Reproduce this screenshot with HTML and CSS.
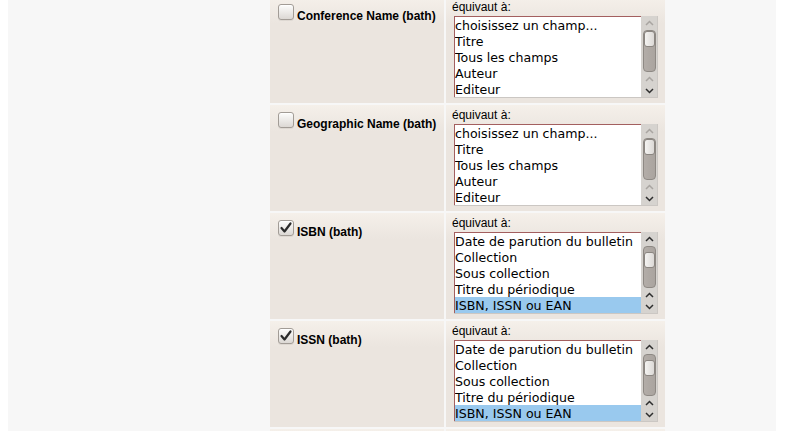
FILE: index.html
```html
<!DOCTYPE html>
<html lang="fr">
<head>
<meta charset="utf-8">
<title>Correspondance des champs</title>
<link rel="stylesheet" href="styles.css">
</head>
<body>
<div class="page">
  <div class="fields">

    <div class="row">
      <div class="cell name"><span class="cb"></span><span class="label">Conference Name (bath)</span></div>
      <div class="cell map">
        <div class="eq">équivaut à:</div>
        <div class="select">
          <ul class="list">
            <li>choisissez un champ...</li>
            <li>Titre</li>
            <li>Tous les champs</li>
            <li>Auteur</li>
            <li>Editeur</li>
          </ul>
          <div class="sb">
            <svg class="arr off" viewBox="0 0 9 6"><path d="M1 5 L4.5 1.5 L8 5"/></svg>
            <div class="track"><div class="thumb"></div></div>
            <svg class="arr off up2" viewBox="0 0 9 6"><path d="M1 5 L4.5 1.5 L8 5"/></svg>
            <svg class="arr down" viewBox="0 0 9 6"><path d="M1 1 L4.5 4.5 L8 1"/></svg>
          </div>
        </div>
      </div>
    </div>

    <div class="row">
      <div class="cell name"><span class="cb"></span><span class="label">Geographic Name (bath)</span></div>
      <div class="cell map">
        <div class="eq">équivaut à:</div>
        <div class="select">
          <ul class="list">
            <li>choisissez un champ...</li>
            <li>Titre</li>
            <li>Tous les champs</li>
            <li>Auteur</li>
            <li>Editeur</li>
          </ul>
          <div class="sb">
            <svg class="arr off" viewBox="0 0 9 6"><path d="M1 5 L4.5 1.5 L8 5"/></svg>
            <div class="track"><div class="thumb"></div></div>
            <svg class="arr off up2" viewBox="0 0 9 6"><path d="M1 5 L4.5 1.5 L8 5"/></svg>
            <svg class="arr down" viewBox="0 0 9 6"><path d="M1 1 L4.5 4.5 L8 1"/></svg>
          </div>
        </div>
      </div>
    </div>

    <div class="row">
      <div class="cell name"><span class="cb checked"><svg viewBox="0 0 16 16"><path d="M3.5 8 L6.5 11.5 L12.5 3.5"/></svg></span><span class="label">ISBN (bath)</span></div>
      <div class="cell map">
        <div class="eq">équivaut à:</div>
        <div class="select">
          <ul class="list">
            <li>Date de parution du bulletin</li>
            <li>Collection</li>
            <li>Sous collection</li>
            <li>Titre du périodique</li>
            <li class="sel">ISBN, ISSN ou EAN</li>
          </ul>
          <div class="sb">
            <svg class="arr" viewBox="0 0 9 6"><path d="M1 5 L4.5 1.5 L8 5"/></svg>
            <div class="track scrolled"><div class="thumb"></div></div>
            <svg class="arr up2" viewBox="0 0 9 6"><path d="M1 5 L4.5 1.5 L8 5"/></svg>
            <svg class="arr down" viewBox="0 0 9 6"><path d="M1 1 L4.5 4.5 L8 1"/></svg>
          </div>
        </div>
      </div>
    </div>

    <div class="row">
      <div class="cell name"><span class="cb checked"><svg viewBox="0 0 16 16"><path d="M3.5 8 L6.5 11.5 L12.5 3.5"/></svg></span><span class="label">ISSN (bath)</span></div>
      <div class="cell map">
        <div class="eq">équivaut à:</div>
        <div class="select">
          <ul class="list">
            <li>Date de parution du bulletin</li>
            <li>Collection</li>
            <li>Sous collection</li>
            <li>Titre du périodique</li>
            <li class="sel">ISBN, ISSN ou EAN</li>
          </ul>
          <div class="sb">
            <svg class="arr" viewBox="0 0 9 6"><path d="M1 5 L4.5 1.5 L8 5"/></svg>
            <div class="track scrolled"><div class="thumb"></div></div>
            <svg class="arr up2" viewBox="0 0 9 6"><path d="M1 5 L4.5 1.5 L8 5"/></svg>
            <svg class="arr down" viewBox="0 0 9 6"><path d="M1 1 L4.5 4.5 L8 1"/></svg>
          </div>
        </div>
      </div>
    </div>

    <div class="row">
      <div class="cell name"></div>
      <div class="cell map"></div>
    </div>

  </div>
</div>
</body>
</html>
```
FILE: styles.css
```css
html, body {
  margin: 0;
  padding: 0;
  height: 100%;
  overflow: hidden;
  background: #ffffff;
}
body {
  padding-left: 8px;
  font-family: "Liberation Sans", Arial, sans-serif;
  font-size: 12px;
  color: #000;
}
.page {
  display: flow-root;
  width: 768px;
  min-height: 100%;
  background: #f7f7f7;
}
.fields {
  margin: -3px 0 0 262px;
  display: flex;
  flex-direction: column;
  gap: 2px;
}
.row {
  display: grid;
  grid-template-columns: 174px 219px;
  column-gap: 2px;
  height: 106px;
}
.cell {
  background: linear-gradient(#f5f0ea, #ebe5df 26px);
}
.name {
  display: flex;
  align-items: baseline;
  padding: 7px 0 0 8px;
}
.cb {
  display: block;
  flex: none;
  width: 14px;
  height: 14px;
  margin-right: 3px;
  border: 1px solid #a29c96;
  border-radius: 3px;
  background: linear-gradient(#fdfdfc, #dcd8d4);
  box-shadow: inset 0 1px 0 #ffffff, 0 1px 0 rgba(0, 0, 0, 0.06);
}
.cb svg {
  display: block;
  width: 16px;
  height: 16px;
  margin: -1px 0 0 -1px;
}
.cb svg path {
  fill: none;
  stroke: #2b2b2b;
  stroke-width: 2.2;
  stroke-linecap: round;
  stroke-linejoin: round;
}
.label {
  font-weight: bold;
  line-height: 14px;
}
.map {
  padding: 3px 0 0 6px;
}
.eq {
  line-height: 14px;
}
.select {
  display: flex;
  width: 203px;
  margin: 2px 0 0 2px;
  border-right: 1px solid #cbc7c3;
  border-bottom: 1px solid #cbc7c3;
}
.list {
  list-style: none;
  margin: 0;
  padding: 0;
  width: 186px;
  height: 80px;
  background: #ffffff;
  border-top: 1px solid #a35f5f;
  border-left: 1px solid #a35f5f;
  font-family: "DejaVu Sans", sans-serif;
  font-size: 12.6px;
}
.list li {
  height: 15px;
  padding-top: 1px;
  line-height: 16px;
  white-space: nowrap;
  overflow: hidden;
}
.list li.sel {
  background: #99c9ee;
}
.sb {
  width: 16px;
  height: 81px;
  box-sizing: border-box;
  background: #d6d3cf;
  display: flex;
  flex-direction: column;
  align-items: center;
  padding-top: 4px;
}
.arr {
  display: block;
  width: 9px;
  height: 6px;
  flex: none;
}
.arr path {
  fill: none;
  stroke: #2e2e2e;
  stroke-width: 1.5;
}
.arr.off path {
  stroke: #a9a5a1;
}
.track {
  flex: none;
  width: 11px;
  height: 40px;
  margin-top: 4px;
  border: 1px solid #8e8984;
  border-radius: 4px;
  background: linear-gradient(90deg, #b3ada8, #aaa49f);
}
.thumb {
  width: 9px;
  height: 14px;
  margin: 0 auto;
  border: 1px solid #8b8681;
  border-radius: 3px;
  background: linear-gradient(90deg, #f4f3f1, #dcd9d6);
}
.track.scrolled .thumb {
  margin-top: 5px;
}
.arr.up2 {
  margin-top: 4px;
}
.arr.down {
  margin-top: 6px;
}
```
